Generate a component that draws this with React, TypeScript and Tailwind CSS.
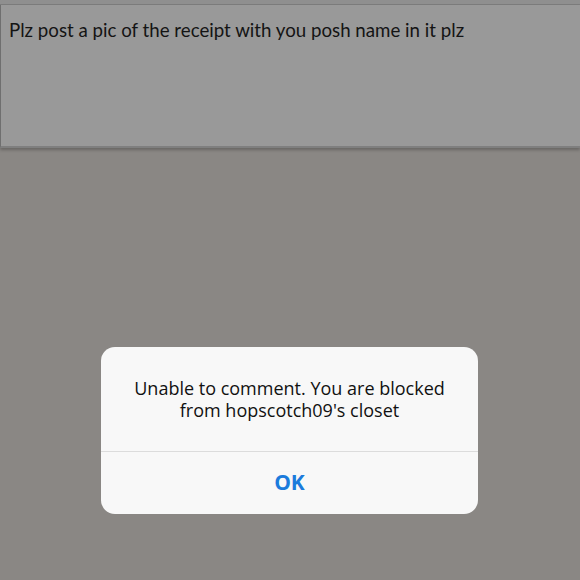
export default function App() {
  return (
    <div
      className="relative w-[580px] h-[580px] overflow-hidden bg-[#8a8784]"
      style={{ fontFamily: '"Open Sans", "Liberation Sans", sans-serif' }}
    >
      <div className="h-[5px] bg-[#8f8f8f] border-b border-[#7d7d7d]" />
      <div className="h-[143px] bg-[#999999] border-l border-[#6f6f6f] border-b-2 border-b-[#7f7f7f] shadow-[0_2px_3px_rgba(0,0,0,0.25)] px-2 pt-[13px]">
        <p className="font-['Lato',sans-serif] text-[18.7px] leading-6 text-[#141414]">
          Plz post a pic of the receipt with you posh name in it plz
        </p>
      </div>

      <div className="absolute left-[101px] top-[347px] w-[377px] rounded-[14px] bg-[#f8f8f8] overflow-hidden">
        <div className="h-[104px] flex items-center justify-center px-4">
          <p className="text-center text-[18px] leading-[22px] text-[#111]">
            Unable to comment. You are blocked
            <br />
            from hopscotch09's closet
          </p>
        </div>
        <div className="h-px bg-[#dcdcdc]" />
        <div className="h-[62px] flex items-center justify-center">
          <span className="text-[21px] font-bold text-[#1b7bdc]">OK</span>
        </div>
      </div>
    </div>
  );
}
